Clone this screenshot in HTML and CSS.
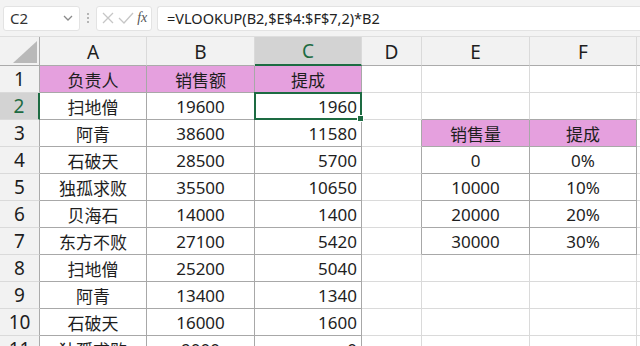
FILE: index.html
```html
<!DOCTYPE html>
<html lang="zh-CN">
<head>
  <meta charset="UTF-8" />
  <title>VLOOKUP 提成</title>
  <link rel="stylesheet" href="styles.css">
</head>
<body>
  <div class="toolbar">
    <div class="namebox">
      <span>C2</span>
      <svg class="chev" width="10" height="6" viewBox="0 0 10 6"><path d="M1 1 L5 5 L9 1" fill="none" stroke="#8a8a8a" stroke-width="1.3"/></svg>
    </div>
    <div class="dots"><i></i><i></i><i></i></div>
    <div class="fxbox">
      <svg width="14" height="14" viewBox="0 0 14 14"><path d="M2 2 L12 12 M12 2 L2 12" stroke="#c6c6c6" stroke-width="1.3"/></svg>
      <svg width="16" height="14" viewBox="0 0 16 14"><path d="M1 7 L6 12 L15 2" fill="none" stroke="#c6c6c6" stroke-width="1.3"/></svg>
      <span class="fx">fx</span>
    </div>
    <div class="formula">=VLOOKUP(B2,$E$4:$F$7,2)*B2</div>
  </div>

  <div class="sheet">
    <div class="corner"><svg width="24" height="22" viewBox="0 0 24 22"><polygon points="24,0 24,22 0,22" fill="#b9b9b9"/></svg></div>
    <div class="ch">A</div>
    <div class="ch">B</div>
    <div class="ch sel">C</div>
    <div class="ch">D</div>
    <div class="ch">E</div>
    <div class="ch">F</div>
    <div class="ch last"></div>

    <div class="rh">1</div>
    <div class="c t head">负责人</div>
    <div class="c t head">销售额</div>
    <div class="c t head">提成</div>
    <div class="c"></div><div class="c"></div><div class="c"></div><div class="c last"></div>

    <div class="rh sel">2</div>
    <div class="c t">扫地僧</div>
    <div class="c t">19600</div>
    <div class="c t num active">1960</div>
    <div class="c"></div><div class="c bb"></div><div class="c bb"></div><div class="c last"></div>

    <div class="rh">3</div>
    <div class="c t">阿青</div>
    <div class="c t">38600</div>
    <div class="c t num">11580</div>
    <div class="c br"></div><div class="c r head">销售量</div><div class="c r head">提成</div><div class="c last"></div>

    <div class="rh">4</div>
    <div class="c t">石破天</div>
    <div class="c t">28500</div>
    <div class="c t num">5700</div>
    <div class="c br"></div><div class="c r">0</div><div class="c r">0%</div><div class="c last"></div>

    <div class="rh">5</div>
    <div class="c t">独孤求败</div>
    <div class="c t">35500</div>
    <div class="c t num">10650</div>
    <div class="c br"></div><div class="c r">10000</div><div class="c r">10%</div><div class="c last"></div>

    <div class="rh">6</div>
    <div class="c t">贝海石</div>
    <div class="c t">14000</div>
    <div class="c t num">1400</div>
    <div class="c br"></div><div class="c r">20000</div><div class="c r">20%</div><div class="c last"></div>

    <div class="rh">7</div>
    <div class="c t">东方不败</div>
    <div class="c t">27100</div>
    <div class="c t num">5420</div>
    <div class="c br"></div><div class="c r">30000</div><div class="c r">30%</div><div class="c last"></div>

    <div class="rh">8</div>
    <div class="c t">扫地僧</div>
    <div class="c t">25200</div>
    <div class="c t num">5040</div>
    <div class="c"></div><div class="c"></div><div class="c"></div><div class="c last"></div>

    <div class="rh">9</div>
    <div class="c t">阿青</div>
    <div class="c t">13400</div>
    <div class="c t num">1340</div>
    <div class="c"></div><div class="c"></div><div class="c"></div><div class="c last"></div>

    <div class="rh">10</div>
    <div class="c t">石破天</div>
    <div class="c t">16000</div>
    <div class="c t num">1600</div>
    <div class="c"></div><div class="c"></div><div class="c"></div><div class="c last"></div>

    <div class="rh">11</div>
    <div class="c t">独孤求败</div>
    <div class="c t">9000</div>
    <div class="c t num">0</div>
    <div class="c"></div><div class="c"></div><div class="c"></div><div class="c last"></div>
  </div>
</body>
</html>
```

FILE: styles.css
```css
html, body {
  margin: 0;
  width: 640px;
  height: 346px;
  overflow: hidden;
  background: #fff;
  font-family: "Noto Sans", "Noto Sans CJK SC", sans-serif;
  color: #1e1e1e;
}
.toolbar {
  height: 37px;
  box-sizing: border-box;
  background: #f3f3f3;
  display: flex;
  align-items: center;
  padding: 0 0 0 3px;
  gap: 5px;
  border-bottom: 1px solid #dedede;
}
.namebox {
  width: 77px;
  height: 25px;
  box-sizing: border-box;
  background: #fff;
  border: 1px solid #e3e3e3;
  border-radius: 3px;
  display: flex;
  align-items: center;
  justify-content: space-between;
  padding: 0 6px 0 6px;
  font-size: 15px;
  color: #333;
}
.dots {
  display: flex;
  flex-direction: column;
  gap: 2px;
  width: 6px;
  align-items: center;
}
.dots i {
  width: 2px;
  height: 2px;
  background: #b5b5b5;
}
.fxbox {
  width: 56px;
  height: 25px;
  box-sizing: border-box;
  background: #fff;
  border: 1px solid #e3e3e3;
  border-radius: 3px;
  display: flex;
  align-items: center;
  justify-content: space-around;
  padding: 0 2px;
}
.fx {
  font-family: "Liberation Serif", serif;
  font-style: italic;
  font-size: 14px;
  color: #555;
}
.formula {
  flex: 1;
  height: 25px;
  box-sizing: border-box;
  background: #fff;
  border: 1px solid #e3e3e3;
  border-right: none;
  border-radius: 3px 0 0 3px;
  display: flex;
  align-items: center;
  padding-left: 9px;
  font-size: 14.5px;
  color: #222;
}
.sheet {
  display: grid;
  grid-template-columns: 40px 107px 108px 107px 60px 108px 107px 1fr;
  grid-template-rows: 29px;
  grid-auto-rows: 27px;
}
.corner, .ch, .rh, .c {
  box-sizing: border-box;
  border-right: 1px solid #dadada;
  border-bottom: 1px solid #dadada;
  display: flex;
  align-items: center;
  justify-content: center;
  white-space: nowrap;
  position: relative;
}
.corner {
  background: #f2f2f2;
  align-items: flex-end;
  justify-content: flex-end;
  padding: 0 2px 2px 0;
  border-bottom-color: #ababab;
  border-right-color: #ababab;
}
.ch {
  background: #f2f2f2;
  font-size: 19px;
  border-bottom-color: #ababab;
  padding-top: 1px;
}
.ch.sel {
  background: #d3d3d3;
  color: #1d6b42;
  border-bottom: 2px solid #1d6b42;
}
.ch.last, .c.last {
  border-right: none;
}
.rh {
  background: #f2f2f2;
  font-size: 19px;
  border-right-color: #ababab;
}
.rh.sel {
  background: #d3d3d3;
  color: #1d6b42;
  border-right: 2px solid #1d6b42;
}
.c {
  font-size: 17px;
}
.c.t {
  border-right-color: #a8a8a8;
  border-bottom-color: #a8a8a8;
}
.c.num {
  justify-content: flex-end;
  padding-right: 4px;
}
.c.head {
  background: #e5a0de;
}
.c.r {
  border-right-color: #a8a8a8;
  border-bottom-color: #a8a8a8;
}
.c.br {
  border-right-color: #a8a8a8;
}
.c.bb {
  border-bottom-color: #a8a8a8;
}
.c.active::after {
  content: "";
  position: absolute;
  left: -1px;
  top: -1px;
  right: -1px;
  bottom: -1px;
  border: 2px solid #1d6b42;
}
.c.active::before {
  content: "";
  position: absolute;
  right: -3px;
  bottom: -3px;
  width: 5px;
  height: 5px;
  background: #1d6b42;
  border: 1px solid #fff;
  z-index: 1;
}
```
